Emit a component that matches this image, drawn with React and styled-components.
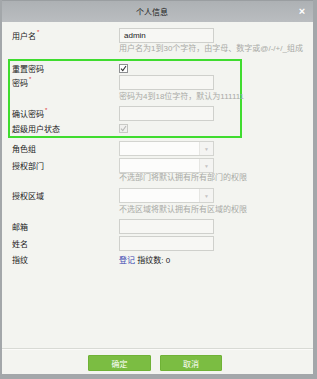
import React from "react";
import styled, { createGlobalStyle } from "styled-components";

const Global = createGlobalStyle`
  html, body { margin: 0; padding: 0; background: #a3a7aa; }
  #root { width: 317px; height: 379px; }
  * { box-sizing: border-box; }
`;

const FONT = `"Liberation Sans", "Noto Sans CJK SC", sans-serif`;

const Dialog = styled.div`
  width: 317px;
  height: 379px;
  display: flex;
  flex-direction: column;
  background: #f3f4f0;
  border-left: 2px solid #a3a7aa;
  border-right: 4px solid #a3a7aa;
  border-bottom: 5px solid #a3a7aa;
  font-family: ${FONT};
  font-size: 8px;
  color: #222;
`;

const TitleBar = styled.div`
  height: 22px;
  flex: none;
  display: flex;
  align-items: center;
  background: linear-gradient(#adb1b4, #babdc0);
  border-top: 1px solid #9a9ea1;
`;

const Title = styled.div`
  flex: 1;
  text-align: center;
  padding-left: 7px;
  color: #1a1a1a;
  font-size: 8px;
`;

const Close = styled.div`
  width: 14px;
  margin-right: 4px;
  text-align: center;
  color: #fff;
  font-size: 11px;
  font-weight: bold;
  line-height: 1;
`;

const Body = styled.div`
  flex: 1;
  padding: 6px 0 0 10px;
`;

const Row = styled.div`
  display: grid;
  grid-template-columns: 107px 95px;
  align-items: center;
  height: ${(p) => p.$h || 15}px;
  margin-top: ${(p) => p.$mt || 0}px;
  padding-left: ${(p) => p.$pl || 0}px;
`;

const Label = styled.div`
  color: #222;
  white-space: nowrap;
`;

const Req = styled.span`
  color: #e03030;
  font-size: 6px;
  vertical-align: top;
  position: relative;
  top: -1px;
  margin-left: 1px;
`;

const Hint = styled.div`
  margin-left: ${(p) => 107 + (p.$pl || 0)}px;
  margin-top: ${(p) => p.$mt || 0}px;
  height: ${(p) => p.$h || 10}px;
  line-height: ${(p) => p.$h || 10}px;
  color: #a9aaa6;
  white-space: nowrap;
  font-size: 8px;
`;

const Input = styled.div`
  height: 15px;
  border: 1px solid #cfd0cc;
  background: #f7f7f4;
  padding-left: 4px;
  line-height: 13px;
  color: #222;
  font-size: 8px;
`;

const Select = styled.div`
  height: 15px;
  border: 1px solid #d3d4d0;
  background: #fcfcfb;
  display: grid;
  grid-template-columns: 1fr 14px;
`;

const Arrow = styled.div`
  border-left: 1px solid #e6e6e3;
  background: #f4f4f2;
  color: #c4c4c4;
  font-size: 5px;
  display: flex;
  align-items: center;
  justify-content: center;
`;

const Check = styled.div`
  width: 9px;
  height: 9px;
  border: 1px solid ${(p) => (p.$disabled ? "#c9cac6" : "#8d8f91")};
  background: ${(p) => (p.$disabled ? "#f0f0ee" : "#fff")};
  display: flex;
  align-items: center;
  justify-content: center;
`;

const GreenBox = styled.div`
  margin-top: 5px;
  margin-left: -4px;
  width: 234px;
  border: 2px solid #3fdc2f;
`;

const Finger = styled.div`
  white-space: nowrap;
  color: #222;
`;

const Link = styled.span`
  color: #3a45b0;
`;

const Footer = styled.div`
  flex: none;
  border-top: 1px solid #d8dad5;
  box-shadow: inset 0 1px 0 #fbfbf9;
  padding: 6px 5px 3px 0;
  display: flex;
  justify-content: center;
  gap: 9px;
`;

const Button = styled.div`
  width: ${(p) => p.$w}px;
  height: 16px;
  background: #7bbd42;
  border: 1px solid #6fb236;
  border-radius: 1px;
  color: #fff;
  font-size: 8px;
  display: flex;
  align-items: center;
  justify-content: center;
`;

const Tick = ({ color }) => (
  <svg width="7" height="7" viewBox="0 0 7 7">
    <path d="M1 3.6 L2.8 5.6 L6 1" fill="none" stroke={color} strokeWidth="1.1" />
  </svg>
);

const Dropdown = () => (
  <Select>
    <div />
    <Arrow>▼</Arrow>
  </Select>
);

export default function App() {
  return (
    <>
      <Global />
      <Dialog>
        <TitleBar>
          <Title>个人信息</Title>
          <Close>×</Close>
        </TitleBar>
        <Body>
          <Row>
            <Label>用户名<Req>*</Req></Label>
            <Input>admin</Input>
          </Row>
          <Hint $mt={1}>用户名为1到30个字符，由字母、数字或@/-/+/_组成</Hint>
          <GreenBox>
            <Row $h={14} $pl={2}>
              <Label>重置密码</Label>
              <Check><Tick color="#333" /></Check>
            </Row>
            <Row $pl={2}>
              <Label>密码<Req>*</Req></Label>
              <Input />
            </Row>
            <Hint $mt={1} $h={11} $pl={2}>密码为4到18位字符，默认为111111</Hint>
            <Row $mt={4} $pl={2}>
              <Label>确认密码<Req>*</Req></Label>
              <Input />
            </Row>
            <Row $h={15} $pl={2}>
              <Label>超级用户状态</Label>
              <Check $disabled><Tick color="#b8b9b6" /></Check>
            </Row>
          </GreenBox>
          <Row $mt={3}>
            <Label>角色组</Label>
            <Dropdown />
          </Row>
          <Row $mt={2}>
            <Label>授权部门</Label>
            <Dropdown />
          </Row>
          <Hint>不选部门将默认拥有所有部门的权限</Hint>
          <Row $mt={5}>
            <Label>授权区域</Label>
            <Dropdown />
          </Row>
          <Hint $mt={1} $h={11}>不选区域将默认拥有所有区域的权限</Hint>
          <Row $mt={4}>
            <Label>邮箱</Label>
            <Input />
          </Row>
          <Row $mt={2}>
            <Label>姓名</Label>
            <Input />
          </Row>
          <Row $mt={1} $h={14}>
            <Label>指纹</Label>
            <Finger><Link>登记</Link> 指纹数: 0</Finger>
          </Row>
        </Body>
        <Footer>
          <Button $w={63}>确定</Button>
          <Button $w={62}>取消</Button>
        </Footer>
      </Dialog>
    </>
  );
}
